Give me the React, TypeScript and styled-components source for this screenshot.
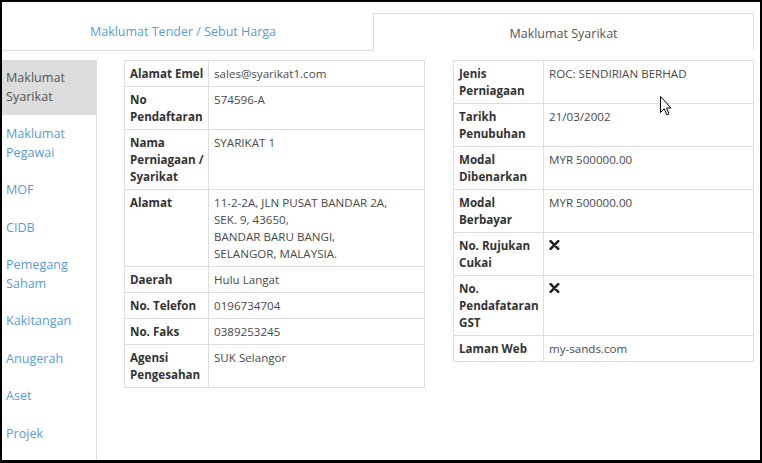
import React from "react";
import styled, { createGlobalStyle } from "styled-components";

const Global = createGlobalStyle`
  html, body { margin: 0; padding: 0; background: #000; }
  body { font-family: "Open Sans", "Liberation Sans", sans-serif; }
  * { box-sizing: border-box; }
`;

const Frame = styled.div`
  position: relative;
  width: 762px;
  height: 463px;
  border: 2px solid #000;
  border-bottom-width: 3px;
  background: #fff;
  display: flex;
  flex-direction: column;
  overflow: hidden;
`;

const TabRow = styled.div`
  display: flex;
  padding-top: 11px;
  padding-right: 6px;
`;

const Tab = styled.div<{ $active?: boolean }>`
  height: 38px;
  display: flex;
  align-items: center;
  justify-content: center;
  font-size: 12.5px;
  color: ${(p) => (p.$active ? "#555" : "#5b9bd1")};
  ${(p) =>
    p.$active
      ? `width: 381px; border: 1px solid #ddd; border-bottom: none; padding-top: 1px;`
      : `flex: 1; border-bottom: 1px solid #ddd; padding-right: 9px;`}
`;

const Body = styled.div`
  flex: 1;
  display: flex;
  align-items: stretch;
`;

const Sidebar = styled.ul`
  list-style: none;
  margin: 9px 0 0 0;
  padding: 0;
  width: 95px;
  border-right: 1px solid #ddd;
  display: flex;
  flex-direction: column;
  gap: 1px;
`;

const NavItem = styled.li<{ $active?: boolean }>`
  padding: 9px 6px 9px 4px;
  font-size: 12.6px;
  line-height: 18.5px;
  color: ${(p) => (p.$active ? "#555" : "#5b9bd1")};
  background: ${(p) => (p.$active ? "#ddd" : "transparent")};
  margin-right: ${(p) => (p.$active ? "-1px" : "0")};
`;

const Content = styled.div`
  flex: 1;
  display: flex;
  align-items: flex-start;
  gap: 28px;
  padding: 9px 6px 0 27px;
`;

const Table = styled.table`
  flex: 1;
  border-collapse: collapse;
  table-layout: fixed;
  font-size: 11.6px;
  line-height: 17px;
`;

const Label = styled.th`
  text-align: left;
  vertical-align: top;
  font-weight: 700;
  color: #333;
  padding: 4px 4px 4px 5px;
  border: 1px solid #ddd;
`;

const Value = styled.td`
  vertical-align: top;
  color: #4a4a4a;
  padding: 4px 5px;
  border: 1px solid #ddd;
`;

const Cursor = styled.svg`
  position: absolute;
  left: 657px;
  top: 93px;
`;

const Cross = () => (
  <svg width="11" height="10" viewBox="0 0 11 10" style={{ display: "block", marginTop: 3 }}>
    <path
      d="M1.6 1.2 L9.2 8.8 M9.2 1.2 L1.6 8.8"
      stroke="#222"
      strokeWidth="2.6"
      strokeLinecap="round"
      fill="none"
    />
  </svg>
);

type Row = { label: React.ReactNode; value: React.ReactNode };

const leftRows: Row[] = [
  { label: "Alamat Emel", value: "sales@syarikat1.com" },
  { label: "No Pendaftaran", value: "574596-A" },
  { label: "Nama Perniagaan / Syarikat", value: "SYARIKAT 1" },
  {
    label: "Alamat",
    value: (
      <>
        11-2-2A, JLN PUSAT BANDAR 2A,
        <br />
        SEK. 9, 43650,
        <br />
        BANDAR BARU BANGI,
        <br />
        SELANGOR, MALAYSIA.
      </>
    ),
  },
  { label: "Daerah", value: "Hulu Langat" },
  { label: "No. Telefon", value: "0196734704" },
  { label: "No. Faks", value: "0389253245" },
  { label: "Agensi Pengesahan", value: "SUK Selangor" },
];

const rightRows: Row[] = [
  { label: "Jenis Perniagaan", value: "ROC: SENDIRIAN BERHAD" },
  { label: "Tarikh Penubuhan", value: "21/03/2002" },
  { label: "Modal Dibenarkan", value: "MYR 500000.00" },
  { label: "Modal Berbayar", value: "MYR 500000.00" },
  { label: "No. Rujukan Cukai", value: <Cross /> },
  { label: "No. Pendafataran GST", value: <Cross /> },
  { label: "Laman Web", value: "my-sands.com" },
];

const InfoTable = ({ rows, labelWidth }: { rows: Row[]; labelWidth: number }) => (
  <Table>
    <colgroup>
      <col style={{ width: labelWidth }} />
      <col />
    </colgroup>
    <tbody>
      {rows.map((r, i) => (
        <tr key={i}>
          <Label>{r.label}</Label>
          <Value>{r.value}</Value>
        </tr>
      ))}
    </tbody>
  </Table>
);

const navItems = [
  "Maklumat Syarikat",
  "Maklumat Pegawai",
  "MOF",
  "CIDB",
  "Pemegang Saham",
  "Kakitangan",
  "Anugerah",
  "Aset",
  "Projek",
];

export default function App() {
  return (
    <>
      <Global />
      <Frame>
        <TabRow>
          <Tab>Maklumat Tender / Sebut Harga</Tab>
          <Tab $active>Maklumat Syarikat</Tab>
        </TabRow>
        <Body>
          <Sidebar>
            {navItems.map((n, i) => (
              <NavItem key={n} $active={i === 0}>
                {n}
              </NavItem>
            ))}
          </Sidebar>
          <Content>
            <InfoTable rows={leftRows} labelWidth={84} />
            <InfoTable rows={rightRows} labelWidth={90} />
          </Content>
        </Body>
        <Cursor width="13" height="22" viewBox="0 0 13 22">
          <path
            d="M1.5 1.5 L1.5 17.5 L5.2 13.8 L7.8 19.8 L10 18.8 L7.5 13 L12 13 Z"
            fill="#fff"
            stroke="#000"
            strokeWidth="1"
            strokeLinejoin="round"
          />
        </Cursor>
      </Frame>
    </>
  );
}
